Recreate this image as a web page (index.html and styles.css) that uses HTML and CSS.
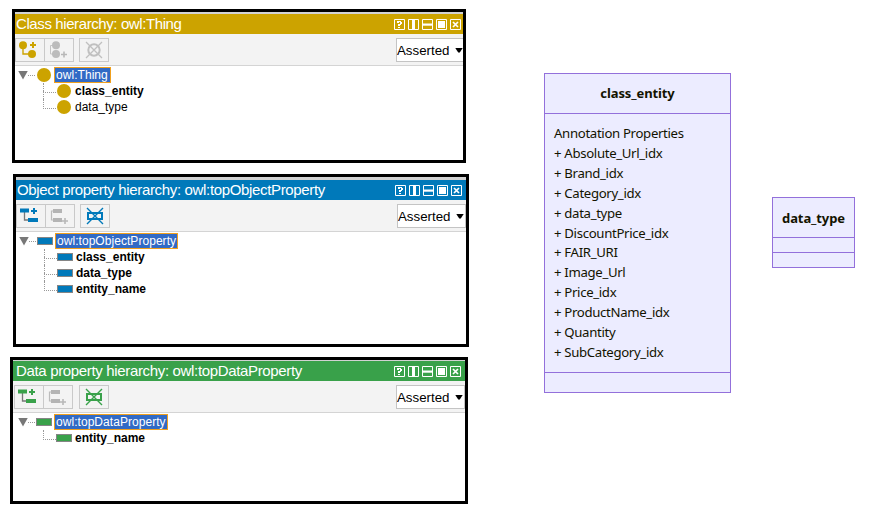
FILE: index.html
```html
<!DOCTYPE html>
<html lang="en">
<head>
<meta charset="utf-8">
<title>Ontology hierarchies</title>
<link rel="stylesheet" href="styles.css">
</head>
<body>
<svg class="defs" width="0" height="0">
  <symbol id="w-help" viewBox="0 0 11 11"><path d="M.5.5h10v10H.5z" fill="none" stroke="#fff"/><path d="M3 2h4v1h1v2H7v1H6v1H4V5h2V3H5v1H3zM4 8h2v1H4z" fill="#fff"/></symbol>
  <symbol id="w-cols" viewBox="0 0 11 11"><path d="M.5.5h10v10H.5z" fill="none" stroke="#fff"/><path d="M4 0h3v11H4z" fill="#fff"/></symbol>
  <symbol id="w-rows" viewBox="0 0 11 11"><path d="M.5.5h10v10H.5z" fill="none" stroke="#fff"/><path d="M0 4.5h11v2.2H0z" fill="#fff"/></symbol>
  <symbol id="w-max" viewBox="0 0 11 11"><path d="M.5.5h10v10H.5z" fill="none" stroke="#fff"/><path d="M2 2h7v7H2z" fill="#fff"/></symbol>
  <symbol id="w-close" viewBox="0 0 11 11"><path d="M.5.5h10v10H.5z" fill="none" stroke="#fff"/><path d="M3 3l5 5M8 3L3 8" stroke="#fff" stroke-width="1.7"/></symbol>

  <symbol id="c-add" viewBox="0 0 29 24"><path d="M8 8v8h8" fill="none" stroke="currentColor" stroke-width="1.4"/><circle cx="8" cy="7.3" r="4" fill="currentColor"/><circle cx="17" cy="16" r="4" fill="currentColor"/><path d="M18 4v6M15 7h6" stroke="currentColor" stroke-width="2"/></symbol>
  <symbol id="c-sib" viewBox="0 0 29 24"><path d="M10 7.5H6.5V16H10" fill="none" stroke="#c4c4c4"/><circle cx="12" cy="7.3" r="4" fill="#bcbcbc"/><circle cx="12" cy="16" r="4" fill="#bcbcbc"/><path d="M20 13.5v6M17 16.5h6" stroke="#b8b8b8" stroke-width="1.6"/></symbol>
  <symbol id="c-del" viewBox="0 0 29 24"><circle cx="15" cy="12" r="5.7" fill="none" stroke="#c0c0c0" stroke-width="2"/><path d="M7 4l16 16M23 4L7 20" stroke="#c0c0c0" stroke-width="1.3"/></symbol>
  <symbol id="p-add" viewBox="0 0 29 24"><path d="M8.5 8v8h5" fill="none" stroke="#777" stroke-width="1.3"/><path d="M4 4.6h9v4H4zM12 14h10v4H12z" fill="currentColor"/><path d="M18 4v6M15 7h6" stroke="currentColor" stroke-width="2"/></symbol>
  <symbol id="p-sib" viewBox="0 0 29 24"><path d="M9 7H6.5v9H9" fill="none" stroke="#bbb" stroke-width="1.2"/><path d="M8 5h9v4H8zM8 14h9v4H8z" fill="#b4b4b4"/><path d="M20 14v6M17 17h6" stroke="#b8b8b8" stroke-width="1.6"/></symbol>
  <symbol id="p-del" viewBox="0 0 29 24"><path d="M8 9h14v6H8z" fill="none" stroke="currentColor" stroke-width="2"/><path d="M7 4l16 16M23 4L7 20" stroke="currentColor" stroke-width="1.4"/></symbol>
</svg>

<main class="page">
  <div class="views">
    <section class="view classes">
      <header class="bar"><h2>Class hierarchy: owl:Thing</h2><span class="wins"><svg><use href="#w-help"/></svg><svg><use href="#w-cols"/></svg><svg><use href="#w-rows"/></svg><svg><use href="#w-max"/></svg><svg><use href="#w-close"/></svg></span></header>
      <div class="tools">
        <span class="btn"><svg><use href="#c-add"/></svg></span><span class="btn"><svg><use href="#c-sib"/></svg></span><span class="btn apart"><svg><use href="#c-del"/></svg></span>
        <span class="select">Asserted<i></i></span>
      </div>
      <ul class="tree">
        <li class="root"><i class="tri"></i><i class="dash"></i><i class="mark"></i><b class="sel">owl:Thing</b></li>
        <li class="leaf"><i class="elbow"></i><i class="mark"></i><b>class_entity</b></li>
        <li class="leaf last"><i class="elbow"></i><i class="mark"></i><span>data_type</span></li>
      </ul>
    </section>

    <section class="view objects">
      <header class="bar"><h2>Object property hierarchy: owl:topObjectProperty</h2><span class="wins"><svg><use href="#w-help"/></svg><svg><use href="#w-cols"/></svg><svg><use href="#w-rows"/></svg><svg><use href="#w-max"/></svg><svg><use href="#w-close"/></svg></span></header>
      <div class="tools">
        <span class="btn"><svg><use href="#p-add"/></svg></span><span class="btn"><svg><use href="#p-sib"/></svg></span><span class="btn apart"><svg><use href="#p-del"/></svg></span>
        <span class="select">Asserted<i></i></span>
      </div>
      <ul class="tree">
        <li class="root"><i class="tri"></i><i class="dash"></i><i class="mark"></i><b class="sel">owl:topObjectProperty</b></li>
        <li class="leaf"><i class="elbow"></i><i class="mark"></i><b>class_entity</b></li>
        <li class="leaf"><i class="elbow"></i><i class="mark"></i><b>data_type</b></li>
        <li class="leaf last"><i class="elbow"></i><i class="mark"></i><b>entity_name</b></li>
      </ul>
    </section>

    <section class="view data">
      <header class="bar"><h2>Data property hierarchy: owl:topDataProperty</h2><span class="wins"><svg><use href="#w-help"/></svg><svg><use href="#w-cols"/></svg><svg><use href="#w-rows"/></svg><svg><use href="#w-max"/></svg><svg><use href="#w-close"/></svg></span></header>
      <div class="tools">
        <span class="btn"><svg><use href="#p-add"/></svg></span><span class="btn"><svg><use href="#p-sib"/></svg></span><span class="btn apart"><svg><use href="#p-del"/></svg></span>
        <span class="select">Asserted<i></i></span>
      </div>
      <ul class="tree">
        <li class="root"><i class="tri"></i><i class="dash"></i><i class="mark"></i><b class="sel">owl:topDataProperty</b></li>
        <li class="leaf last"><i class="elbow"></i><i class="mark"></i><b>entity_name</b></li>
      </ul>
    </section>
  </div>

  <div class="diagram">
    <article class="node entity">
      <h3>class_entity</h3>
      <ul class="members">
        <li>Annotation Properties</li>
        <li>+ Absolute_Url_idx</li>
        <li>+ Brand_idx</li>
        <li>+ Category_idx</li>
        <li>+ data_type</li>
        <li>+ DiscountPrice_idx</li>
        <li>+ FAIR_URI</li>
        <li>+ Image_Url</li>
        <li>+ Price_idx</li>
        <li>+ ProductName_idx</li>
        <li>+ Quantity</li>
        <li>+ SubCategory_idx</li>
      </ul>
      <div class="methods"></div>
    </article>
    <article class="node type">
      <h3>data_type</h3>
      <div class="members"></div>
      <div class="methods"></div>
    </article>
  </div>
</main>
</body>
</html>
```
FILE: styles.css
```css
* { box-sizing: border-box; }
body { margin: 0; background: #fff; font-family: "Liberation Sans", Arial, sans-serif; color: #000; }
ul, h2, h3 { margin: 0; padding: 0; list-style: none; }
.defs { display: block; }
.page { display: flex; width: 876px; height: 520px; }
.views { width: 544px; padding: 9px 0 0 10px; }

.view { border: 3px solid #000; background: #fff; overflow: hidden; }
.classes { --tone: #cca300; width: 454px; height: 154px; margin-left: 2px; }
.objects { --tone: #0079ba; width: 456px; height: 173px; margin: 11px 0 0 3px; }
.data { --tone: #39a14a; width: 458px; height: 147px; margin-top: 10px; }

.bar { display: flex; justify-content: space-between; height: 22px; padding: 0 4px 0 1px; border-top: 2px solid #d2d2d2; background: var(--tone); color: #fff; }
.classes .bar { padding-right: 2px; }
.objects .bar { height: 23px; border-top-width: 3px; }
.data .bar { height: 21px; padding-left: 3px; border-top-width: 1px; }
.bar h2 { font-size: 15px; font-weight: 400; line-height: 20px; letter-spacing: -0.34px; white-space: nowrap; }
.classes .bar h2 { letter-spacing: -0.4px; }
.wins { display: flex; gap: 3px; padding-top: 5px; }
.wins svg { width: 11px; height: 11px; }

.tools { display: flex; height: 32px; padding-top: 4px; border-bottom: 1px solid #d4d4d4; background: #f3f3f3; color: var(--tone); }
.btn { width: 30px; height: 24px; margin-right: -1px; border: 1px solid #c9c9c9; }
.btn svg { display: block; width: 29px; height: 24px; margin: -1px; }
.apart { margin-left: 6px; }
.data .tools { padding-left: 1px; }
.data .apart { margin-left: 7px; }
.select { display: flex; align-items: center; justify-content: space-between; width: 67px; height: 24px; margin-left: auto; border: 1px solid #c4c4c4; border-right: 0; background: #fff; color: #000; font-size: 13.3px; }
.objects .select, .data .select { width: 69px; padding-right: 1px; border-right: 1px solid #c4c4c4; }
.select i { width: 8px; height: 5px; background: #000; clip-path: polygon(0 0, 100% 0, 60% 100%, 40% 100%); }

.tree { padding: 1px 0 0 3px; font-size: 12px; }
.data .tree { padding-left: 5px; }
.tree li { display: flex; align-items: center; height: 16px; }
.tri { width: 10px; height: 9px; background: #777; clip-path: polygon(0 0, 100% 0, 50% 100%); }
.dash { width: 7px; height: 1px; border-top: 1px dotted #999; }
.mark { width: 14px; height: 14px; margin: 0 3px 0 2px; border-radius: 50%; background: var(--tone); }
.objects .mark, .data .mark { width: 16px; height: 8px; margin: 0 2px 0 1px; border: 1px solid #858585; border-radius: 0; }
.sel { padding: 0 1px; border: 1px solid #f0a01e; background: #316ac5; color: #fff; font-weight: 400; line-height: 14px; letter-spacing: 0.05px; }
.classes .sel { padding-right: 2px; }
.leaf { padding-left: 25px; }
.elbow { position: relative; width: 12px; height: 16px; }
.elbow::before { content: ""; position: absolute; left: 0; top: 0; width: 12px; height: 9px; border-left: 1px dotted #999; border-bottom: 1px dotted #999; }
.leaf:not(.last) .elbow::after { content: ""; position: absolute; left: 0; top: 8px; height: 8px; border-left: 1px dotted #999; }
.leaf .mark { margin-left: 2px; margin-right: 4px; }
.objects .leaf .mark, .data .leaf .mark { margin-left: 1px; margin-right: 3px; }

.diagram { display: flex; align-items: flex-start; font-family: "Noto Sans", sans-serif; color: #131300; }
.node { border: 1px solid #9370db; background: #ececff; }
.node h3 { height: 39px; font-size: 13px; line-height: 39px; letter-spacing: -0.1px; text-align: center; }
.entity { width: 187px; height: 320px; margin-top: 73px; }
.entity .members { height: 260px; padding: 10px 0 0 9px; border-top: 1px solid #9370db; border-bottom: 1px solid #9370db; font-size: 13.2px; line-height: 19.9px; letter-spacing: -0.33px; white-space: nowrap; }
.type { width: 83px; height: 71px; margin: 197px 0 0 41px; }
.type h3 { line-height: 40px; }
.type .members { height: 16px; border: solid #9370db; border-width: 1px 0; }
```
